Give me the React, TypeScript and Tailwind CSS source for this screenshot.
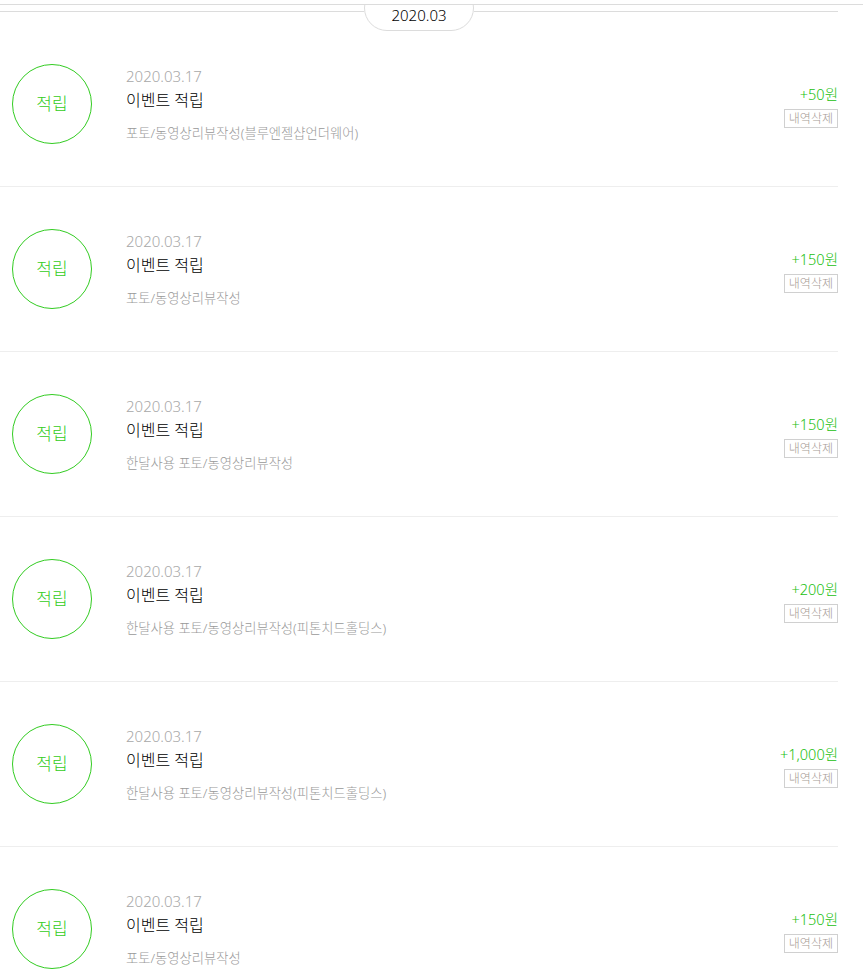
const items = [
  { amount: '+50원', desc: '포토/동영상리뷰작성(블루엔젤샵언더웨어)' },
  { amount: '+150원', desc: '포토/동영상리뷰작성' },
  { amount: '+150원', desc: '한달사용 포토/동영상리뷰작성' },
  { amount: '+200원', desc: '한달사용 포토/동영상리뷰작성(피톤치드홀딩스)' },
  { amount: '+1,000원', desc: '한달사용 포토/동영상리뷰작성(피톤치드홀딩스)' },
  { amount: '+150원', desc: '포토/동영상리뷰작성' },
]

const App = () => {
  return (
    <div
      className="min-h-screen bg-white font-light"
      style={{ fontFamily: '"Noto Sans", "Noto Sans CJK KR", sans-serif' }}
    >
      <div className="pt-[4px]">
        <div className="h-px bg-[#dcdcdc]" />
      </div>
      <div className="w-[838px]">
        {/* month header */}
        <div className="flex h-[26px] overflow-hidden">
          <div className="mt-[6px] h-px flex-1 bg-[#dcdcdc]" />
          <div className="-mt-[20px] flex h-[46px] w-[110px] shrink-0 items-end justify-center rounded-[23px] border border-[#dcdcdc] bg-white pb-[7px] text-[15px] leading-none text-black">
            2020.03
          </div>
          <div className="mt-[6px] h-px flex-1 bg-[#dcdcdc]" />
        </div>

        {items.map((item, i) => (
          <div
            key={i}
            className={
              'flex items-start border-b border-[#eeeeee] pb-[42px] ' +
              (i === 0 ? 'pt-[33px]' : 'pt-[42px]')
            }
          >
            <div className="ml-[12px] flex h-[80px] w-[80px] shrink-0 items-center justify-center rounded-full border border-[#33cc22] text-[17px] text-[#33cc22]">
              적립
            </div>
            <div className="ml-[34px] flex flex-1 flex-col">
              <div className="mt-[3px] text-[15px] leading-[18px] text-[#a8a8a8]">2020.03.17</div>
              <div className="mt-[6px] text-[16px] leading-[18px] text-black">이벤트 적립</div>
              <div className="mt-[15px] text-[13.3px] leading-[18px] text-[#999999]">{item.desc}</div>
            </div>
            <div className="mt-[21px] flex flex-col items-end">
              <div className="text-[14.5px] leading-[18px] text-[#22c010]">{item.amount}</div>
              <div className="mt-[6px] flex h-[19px] items-center border border-[#d0d0d0] px-[4px] text-[12px] leading-none text-[#a69a94]">
                내역삭제
              </div>
            </div>
          </div>
        ))}
      </div>
    </div>
  )
}

export default App
